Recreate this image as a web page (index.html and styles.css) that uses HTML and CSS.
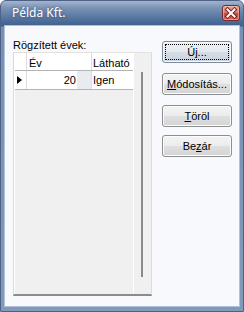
FILE: index.html
```html
<!DOCTYPE html>
<html lang="hu">
<head>
<meta charset="utf-8">
<title>Példa Kft.</title>
<link rel="stylesheet" href="styles.css">
</head>
<body>
<div class="window">
  <div class="titlebar">
    <span class="title">Példa Kft.</span>
    <div class="close">
      <svg width="16" height="14" viewBox="0 0 16 14">
        <path d="M4.5 3.5 L11.5 10.5 M11.5 3.5 L4.5 10.5" stroke="#7a2020" stroke-width="4" stroke-linecap="square"/>
        <path d="M4.5 3.5 L11.5 10.5 M11.5 3.5 L4.5 10.5" stroke="#ffffff" stroke-width="2" stroke-linecap="square"/>
      </svg>
    </div>
  </div>
  <div class="client">
    <div class="left">
      <div class="label">Rögzített évek:</div>
      <div class="grid">
        <div class="cols">
          <div class="row hdr">
            <div class="rh"></div>
            <div class="c1">Év</div>
            <div class="c2">Látható</div>
          </div>
          <div class="row data">
            <div class="rh"><span class="arrow"></span></div>
            <div class="c1 num">20<span class="edit"></span></div>
            <div class="c2">Igen</div>
          </div>
        </div>
        <div class="side"><div class="bar"></div></div>
      </div>
    </div>
    <div class="buttons">
      <div class="btn default"><span class="focus">Új...</span></div>
      <div class="btn"><span><u>M</u>ódosítás...</span></div>
      <div class="btn"><span><u>T</u>öröl</span></div>
      <div class="btn last"><span>Be<u>z</u>ár</span></div>
    </div>
  </div>
</div>
</body>
</html>
```
FILE: styles.css
```css
html, body {
  margin: 0;
  padding: 0;
}
body {
  width: 244px;
  height: 312px;
  overflow: hidden;
  font-family: "Liberation Sans", Arial, sans-serif;
  font-size: 11px;
  color: #000;
  background: #ffffff;
}
.window {
  width: 244px;
  height: 312px;
  box-sizing: border-box;
  display: flex;
  flex-direction: column;
  border: 1px solid #4d6286;
  border-radius: 6px 6px 0 0;
  background: linear-gradient(to bottom, #a4b5cc 0px, #7a93b6 7px, #56759f 17px, #3e5f8d 25px, #7890b3 26px, #8199bb 100%);
}
.titlebar {
  height: 25px;
  flex: none;
  display: flex;
  align-items: center;
  padding-left: 11px;
  padding-bottom: 3px;
  box-sizing: border-box;
}
.title {
  font-family: "Noto Sans", "DejaVu Sans", sans-serif;
  font-size: 12px;
  color: #ffffff;
  text-shadow: 0 0 3px rgba(30, 50, 90, 0.6);
}
.close {
  margin-left: auto;
  margin-right: 3px;
  align-self: flex-start;
  margin-top: 4px;
  width: 18px;
  height: 16px;
  box-sizing: border-box;
  border: 1px solid #7a2b2b;
  border-radius: 3px;
  background: linear-gradient(to bottom, #eaa596 0%, #dc7d6e 45%, #c8443a 55%, #d8685a 100%);
  box-shadow: inset 0 0 0 1px rgba(255, 220, 210, 0.45);
  display: flex;
  align-items: center;
  justify-content: center;
}
.close svg {
  display: block;
}
.client {
  flex: 1;
  margin: 0 4px 5px 4px;
  background: #f7f9fc;
  box-shadow: 0 0 0 1px #b2c1d6;
  display: flex;
  padding: 13px 0 0 8px;
  box-sizing: border-box;
}
.left {
  display: flex;
  flex-direction: column;
}
.label {
  height: 13px;
  line-height: 13px;
  white-space: nowrap;
}
.grid {
  width: 139px;
  height: 244px;
  box-sizing: border-box;
  display: flex;
  border-left: 1px solid #dadada;
  border-top: 1px solid #e2e2e2;
  border-right: 1px solid #dcdcdc;
  border-bottom: 2px solid #8c8c8c;
  background: #f0f0f0;
}
.cols {
  width: 119px;
  flex: none;
  border-left: 1px solid #ffffff;
  box-sizing: border-box;
}
.row {
  display: flex;
  background: #ffffff;
  box-sizing: border-box;
  border-bottom: 1px solid #b4b4b4;
}
.hdr {
  height: 18px;
  background: #ffffff;
}
.data {
  height: 19px;
}
.rh {
  width: 12px;
  border-right: 1px solid #dcdcdc;
  display: flex;
  align-items: center;
  padding-left: 2px;
  box-sizing: border-box;
}
.c1 {
  width: 65px;
  border-right: 1px solid #dcdcdc;
  box-sizing: border-box;
  display: flex;
  align-items: center;
  padding-left: 2px;
}
.c2 {
  flex: 1;
  display: flex;
  align-items: center;
  padding-left: 1px;
  white-space: nowrap;
}
.hdr .c1, .hdr .c2 {
  padding-top: 2px;
}
.num {
  justify-content: flex-end;
  padding-left: 0;
  padding-right: 0;
  align-items: stretch;
  line-height: 18px;
}
.edit {
  width: 14px;
  margin-left: 1px;
  background: #e8ebef;
}
.arrow {
  width: 0;
  height: 0;
  border-top: 4.5px solid transparent;
  border-bottom: 4.5px solid transparent;
  border-left: 5px solid #000000;
}
.side {
  flex: 1;
  border-left: 1px solid #ffffff;
  padding: 19px 0 0 7px;
  box-sizing: border-box;
}
.bar {
  width: 2px;
  height: 205px;
  background: #8a8a8a;
}
.buttons {
  margin-left: 10px;
  margin-top: 2px;
  display: flex;
  flex-direction: column;
  gap: 10px;
}
.btn {
  width: 70px;
  height: 22px;
  box-sizing: border-box;
  border: 1px solid #8c8e92;
  border-radius: 3px;
  background: linear-gradient(to bottom, #f4f4f4 0%, #ececec 48%, #dfdfdf 52%, #d4d4d4 100%);
  box-shadow: inset 0 0 0 1px #fcfcfc;
  display: flex;
  align-items: center;
  justify-content: center;
  padding: 3px;
}
.btn span {
  line-height: 14px;
}
.default {
  border-color: #7f8a98;
  background: linear-gradient(to bottom, #eef2f6 0%, #e3e9ef 48%, #d5dde6 52%, #cbd4de 100%);
  box-shadow: inset 0 0 0 1px #f4f8fb;
}
.focus {
  flex: 1;
  align-self: stretch;
  display: flex;
  align-items: center;
  justify-content: center;
  outline: 1px dotted #000000;
}
.last {
  margin-top: -2px;
}
u {
  text-decoration-thickness: 1px;
  text-underline-offset: 1px;
}
```
